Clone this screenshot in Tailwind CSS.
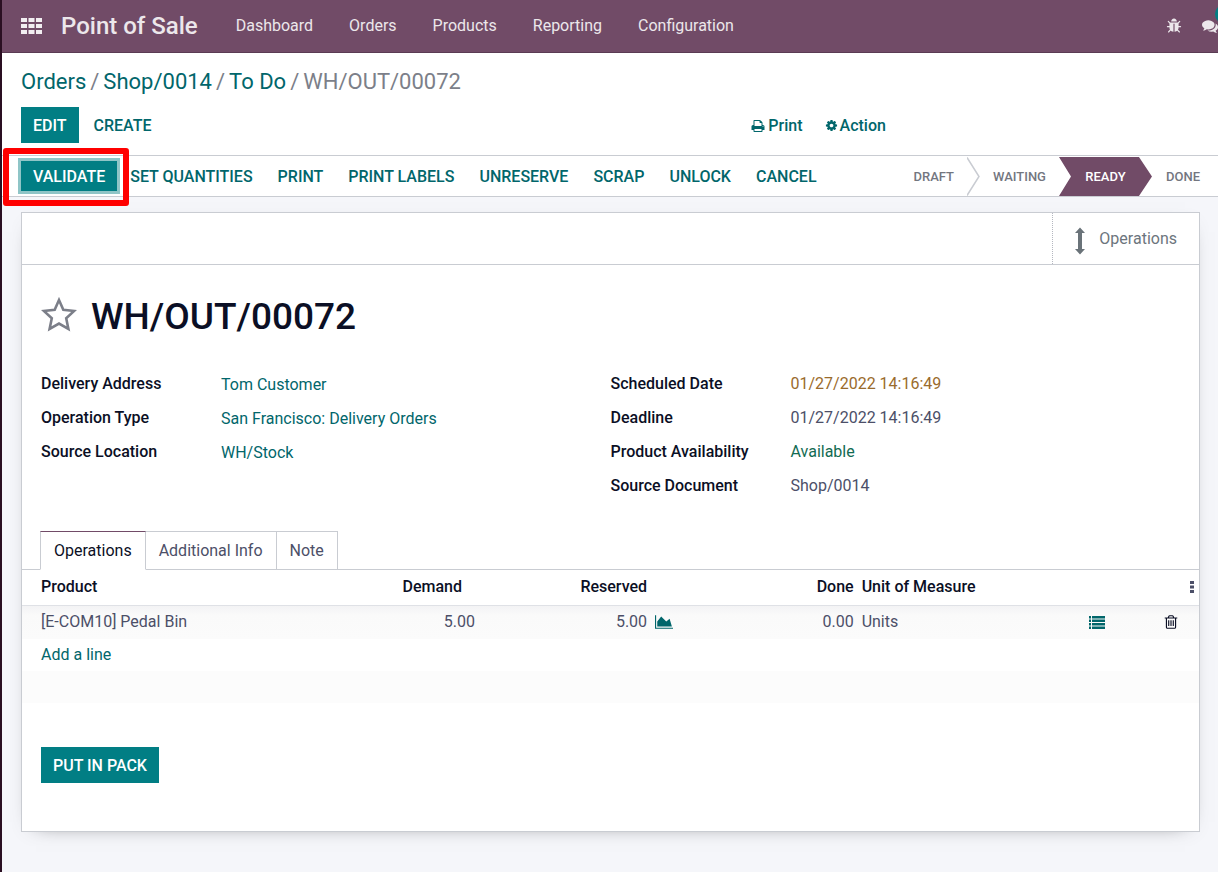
<!DOCTYPE html>
<html lang="en">
<head>
<meta charset="utf-8">
<title>WH/OUT/00072 - Point of Sale</title>
<script src="https://cdn.jsdelivr.net/npm/@tailwindcss/browser@4"></script>
</head>
<body class="min-h-screen overflow-x-hidden border-l-2 border-[#2a0f22] bg-[#f5f6fa] font-['Roboto',sans-serif] text-base leading-6 text-[#4c4f68]">

<nav class="flex h-[53px] items-center overflow-hidden border-b border-[#5a3b53] bg-[#714b67] pl-[19px] text-[#ece7eb]">
  <button type="button" aria-label="Apps" class="shrink-0">
    <svg class="block h-4 w-[21px]" viewBox="0 0 21 16" fill="#f2eef1"><path d="M0 0h6v4H0zM7.500 0h6v4h-6zM15 0h6v4h-6zM0 6h6v4H0zM7.500 6h6v4h-6zM15 6h6v4h-6zM0 12h6v4H0zM7.500 12h6v4h-6zM15 12h6v4h-6z"/></svg>
  </button>
  <a href="#" class="ml-[19px] shrink-0 text-2xl font-medium">Point of Sale</a>
  <div class="ml-[38px] flex shrink-0 gap-9">
    <a href="#">Dashboard</a>
    <a href="#">Orders</a>
    <a href="#">Products</a>
    <a href="#">Reporting</a>
    <a href="#">Configuration</a>
  </div>
  <div class="ml-auto flex shrink-0 items-center gap-5">
    <button type="button" aria-label="Debug">
      <svg class="block size-4" viewBox="0 0 1792 1792" fill="currentColor"><path d="M1696 960q0 26-19 45t-45 19h-224q0 171-67 290l208 209q19 19 19 45t-19 45q-18 19-45 19t-45-19l-198-197q-5 5-15 13t-42 28.500-65 36.500-82 29-97 13v-896h-128v896q-51 0-101.500-13.500t-87-33-66-39-43.500-32.500l-15-14-183 207q-20 21-48 21-24 0-43-16-19-18-20.500-44.500t15.500-46.500l202-227q-58-114-58-274h-224q-26 0-45-19t-19-45 19-45 45-19h224v-294l-173-173q-19-19-19-45t19-45 45-19 45 19l173 173h844l173-173q19-19 45-19t45 19 19 45-19 45l-173 173v294h224q26 0 45 19t19 45zm-480-576h-640q0-133 93.500-226.500t226.500-93.500 226.500 93.500 93.500 226.500z"/></svg>
    </button>
    <button type="button" aria-label="Conversations" class="relative w-4">
      <svg class="block size-4 min-w-4" viewBox="0 0 1792 1792" fill="currentColor"><path d="M1408 768q0 139-94 257t-256.500 186.500-353.500 68.500q-86 0-176-16-124 88-278 128-36 9-86 16h-3q-11 0-20.500-8t-11.500-21q-1-3-1-6.500t.5-6.500 2-6l2.500-5 3.500-5.500 4-5 4.500-5 4-4.500q5-6 23-25t26-29.500 22.500-29 25-38.500 20.500-44q-124-72-195-177t-71-224q0-139 94-257t256.500-186.500 353.500-68.500 353.500 68.500 256.500 186.500 94 257zm384 256q0 120-71 224.500t-195 176.500q10 24 20.500 44t25 38.500 22.500 29 26 29.500 23 25q1 1 4 4.500t4.500 5 4 5 3.500 5.500l2.500 5 2 6 .5 6.500-1 6.500q-3 14-13 22t-22 7q-50-7-86-16-154-40-278-128-90 16-176 16-271 0-472-132 58 4 88 4 161 0 309-45t264-129q125-92 192-212t67-254q0-77-23-152 129 71 204 178t75 230z"/></svg>
      <span class="absolute -top-[14px] left-[13px] size-5 rounded-full bg-[#017e84]"></span>
    </button>
  </div>
</nav>

<header class="bg-white px-[19px] pt-[13px] pb-3">
  <ol class="flex h-8 items-center gap-1 text-[22px] text-[#7c7f89]">
    <li><a href="#" class="text-[#01666b]">Orders</a></li><li>/</li>
    <li><a href="#" class="text-[#01666b]">Shop/0014</a></li><li>/</li>
    <li><a href="#" class="text-[#01666b]">To Do</a></li><li>/</li>
    <li>WH/OUT/00072</li>
  </ol>
  <div class="mt-[9px] flex h-9 items-center font-medium text-[#01666b]">
    <div class="flex basis-[62%] items-center gap-[3px]">
      <button type="button" class="h-9 bg-[#017e84] px-3 pt-px text-white">EDIT</button>
      <button type="button" class="h-9 px-3 pt-px">CREATE</button>
    </div>
    <div class="flex items-center gap-[22px] pt-px">
      <button type="button" class="flex items-center gap-[3px]">
        <svg class="size-[14px]" viewBox="0 0 1792 1792" fill="currentColor"><path d="M448 1536h896v-256h-896v256zm0-640h896v-384h-160q-40 0-68-28t-28-68v-160h-640v640zm1152 64q0-26-19-45t-45-19-45 19-19 45 19 45 45 19 45-19 19-45zm128 0v416q0 13-9.500 22.500t-22.500 9.500h-224v160q0 40-28 68t-68 28h-960q-40 0-68-28t-28-68v-160h-224q-13 0-22.500-9.500t-9.500-22.500v-416q0-79 56.500-135.500t135.500-56.500h64v-544q0-40 28-68t68-28h672q40 0 88 20t76 48l152 152q28 28 48 76t20 88v256h64q79 0 135.500 56.500t56.500 135.500z"/></svg>Print
      </button>
      <button type="button" class="flex items-center gap-[2px]">
        <svg class="size-[13px]" viewBox="0 0 1792 1792" fill="currentColor"><path d="M1152 896q0-106-75-181t-181-75-181 75-75 181 75 181 181 75 181-75 75-181zm512-109v222q0 12-8 23t-20 13l-185 28q-19 54-39 91 35 50 107 138 10 12 10 25t-9 23q-27 37-99 108t-94 71q-12 0-26-9l-138-108q-44 23-91 38-16 136-29 186-7 28-36 28h-222q-14 0-24.500-8.500t-11.500-21.500l-28-184q-49-16-90-37l-141 107q-10 9-25 9-14 0-25-11-126-114-165-168-7-10-7-23 0-12 8-23 15-21 51-66.500t54-70.500q-27-50-41-99l-183-27q-13-2-21-12.500t-8-23.500v-222q0-12 8-23t19-13l186-28q14-46 39-92-40-57-107-138-10-12-10-24 0-10 9-23 26-36 98.500-107.500t94.500-71.500q13 0 26 10l138 107q44-23 91-38 16-136 29-186 7-28 36-28h222q14 0 24.500 8.500t11.500 21.500l28 184q49 16 90 37l142-107q9-9 24-9 13 0 25 10 129 119 165 170 7 8 7 22 0 12-8 23-15 21-51 66.500t-54 70.500q26 50 41 98l183 28q13 2 21 12.500t8 23.500z"/></svg>Action
      </button>
    </div>
  </div>
</header>

<div class="flex h-[42px] items-center justify-between border-y border-[#c9ccd2] bg-white pl-[19px] font-medium text-[#01666b]">
  <div class="flex items-center gap-px">
    <div class="relative">
      <button type="button" class="block h-[30px] bg-[#017e84] px-3 pt-px text-white ring-3 ring-[#8fc5c7]">VALIDATE</button>
      <span class="pointer-events-none absolute -top-[13px] -right-3 -bottom-[15px] -left-[18px] rounded-[3px] border-6 border-[#ff0000]"></span>
    </div>
    <button type="button" class="px-3 pt-px">SET QUANTITIES</button>
    <button type="button" class="px-3 pt-px">PRINT</button>
    <button type="button" class="px-3 pt-px">PRINT LABELS</button>
    <button type="button" class="px-3 pt-px">UNRESERVE</button>
    <button type="button" class="px-3 pt-px">SCRAP</button>
    <button type="button" class="px-3 pt-px">UNLOCK</button>
    <button type="button" class="px-3 pt-px">CANCEL</button>
  </div>
  <div class="flex h-full items-center pt-px text-[13px] text-[#73767f]">
    <button type="button" class="pr-[13px]">DRAFT</button>
    <svg class="h-[39px] w-[13px]" viewBox="0 0 13 39" fill="none" stroke="#c9ccd2" stroke-width="1.500"><path d="M0 0.500L12 19.500L0 38.500"/></svg>
    <button type="button" class="px-[13px]">WAITING</button>
    <button type="button" aria-current="step" class="h-[39px] w-[93px] bg-[#714b67] text-white [clip-path:polygon(0_0,80px_0,93px_50%,80px_100%,0_100%,12px_50%)]">READY</button>
    <button type="button" class="pr-[18px] pl-[14px]">DONE</button>
  </div>
</div>

<main class="mt-[15px] mr-[18px] ml-[19px] border border-[#c9ccd2] bg-white pb-12 shadow-[0_5px_20px_-15px_#000000b0]">
  <div class="flex h-[52px] justify-end border-b border-[#c9ccd2]">
    <button type="button" class="flex items-center border-l border-dotted border-[#b4b7c0] pr-[22px] pl-[22px] text-[#6c757d]">
      <svg class="mt-1 h-7 w-[10px]" viewBox="0 0 10 28" fill="#6a7379"><path d="M5 0.500L10 6H7V22H10L5 27.500L0 22H3V6H0Z"/></svg>
      <span class="ml-[14px] pt-px">Operations</span>
    </button>
  </div>

  <div class="px-[19px]">
    <div class="mt-7 flex h-12 items-center">
      <button type="button" aria-label="Priority" class="pb-[6px]">
        <svg class="block h-[35px] w-[36px]" viewBox="0 0 36 35" fill="none" stroke="#7c7f89" stroke-width="2.600"><path d="M18 3L22.300 12.700L33.200 13.900L25.200 21.200L27.400 32L18 26.600L8.600 32L10.800 21.200L2.800 13.900L13.700 12.700Z"/></svg>
      </button>
      <h1 class="ml-[14px] text-[37px] font-medium text-[#0b0f25]">WH/OUT/00072</h1>
    </div>

    <div class="mt-[26px] grid grid-cols-2">
      <dl class="grid auto-rows-[34px] grid-cols-[180px_1fr] items-center content-start">
        <dt class="font-medium text-[#0b0f25]">Delivery Address</dt><dd class="pt-[2px]"><a href="#" class="text-[#01666b]">Tom Customer</a></dd>
        <dt class="font-medium text-[#0b0f25]">Operation Type</dt><dd class="pt-[2px]"><a href="#" class="text-[#01666b]">San Francisco: Delivery Orders</a></dd>
        <dt class="font-medium text-[#0b0f25]">Source Location</dt><dd class="pt-[2px]"><a href="#" class="text-[#01666b]">WH/Stock</a></dd>
      </dl>
      <dl class="grid auto-rows-[34px] grid-cols-[180px_1fr] items-center content-start">
        <dt class="font-medium text-[#0b0f25]">Scheduled Date</dt><dd class="text-[#9a6b2c]">01/27/2022 14:16:49</dd>
        <dt class="font-medium text-[#0b0f25]">Deadline</dt><dd>01/27/2022 14:16:49</dd>
        <dt class="font-medium text-[#0b0f25]">Product Availability</dt><dd class="text-[#136b53]">Available</dd>
        <dt class="font-medium text-[#0b0f25]">Source Document</dt><dd>Shop/0014</dd>
      </dl>
    </div>
  </div>

  <div class="mt-[28px] flex h-[39px] border-b border-[#c9ccd2] pl-[18px]" role="tablist">
    <button type="button" role="tab" aria-selected="true" class="-mb-px border border-t-[#714b67] border-r-[#c9ccd2] border-b-white border-l-[#c9ccd2] bg-white px-[13px] text-[#0b0f25]">Operations</button>
    <button type="button" role="tab" class="border-t border-r border-[#c9ccd2] px-[13px]">Additional Info</button>
    <button type="button" role="tab" class="border-t border-r border-[#c9ccd2] px-[13px]">Note</button>
  </div>

  <table class="w-full table-fixed">
    <colgroup>
      <col class="w-[25%]"><col class="w-[14%]"><col class="w-[17%]"><col class="w-[15%]"><col class="w-[18%]"><col class="w-[6%]"><col class="w-[5%]">
    </colgroup>
    <thead>
      <tr class="h-[35px] border-b border-[#dfe1e6] text-[#0b0f25]">
        <th class="pl-[19px] text-left font-medium">Product</th>
        <th class="pr-[19px] text-right font-medium">Demand</th>
        <th class="pr-[34px] text-right font-medium">Reserved</th>
        <th class="pr-1 text-right font-medium">Done</th>
        <th class="pl-1 text-left font-medium">Unit of Measure</th>
        <th></th>
        <th class="pr-[5px]"><button type="button" aria-label="Optional columns" class="ml-auto block"><svg class="block h-3 w-1" viewBox="0 0 4 12" fill="#4c4f68"><path d="M0 0h4v3h-4zM0 4.500h4v3h-4zM0 9h4v3h-4z"/></svg></button></th>
      </tr>
    </thead>
    <tbody>
      <tr class="h-[34px] bg-linear-to-b from-[#f2f2f4] via-[#fafafa] via-30% to-[#fbfbfb]">
        <td class="pl-[19px]">[E-COM10] Pedal Bin</td>
        <td class="pr-[6px] text-right">5.00</td>
        <td class="pr-2"><div class="flex items-center justify-end gap-2">5.00<button type="button" aria-label="Forecast report"><svg class="block h-4 w-[18px]" viewBox="0 0 2048 1792" fill="#01666b"><path d="M2048 1536v128h-2048v-1536h128v1408h1920zm-384-1024l256 896h-1664v-576l448-576 576 576z"/></svg></button></div></td>
        <td class="pr-1 text-right">0.00</td>
        <td class="pl-1">Units</td>
        <td><button type="button" aria-label="Detailed operations" class="ml-[19px] block"><svg class="block h-[13px] w-4" viewBox="0 0 16 13" fill="#01666b"><path d="M0 0h2v2.500H0zM3 0h13v2.500H3zM0 3.500h2v2.500H0zM3 3.500h13v2.500H3zM0 7h2v2.500H0zM3 7h13v2.500H3zM0 10.500h2v2.500H0zM3 10.500h13v2.500H3z"/></svg></button></td>
        <td class="pr-5"><button type="button" aria-label="Delete row" class="ml-auto block"><svg class="block size-4" viewBox="0 0 1792 1792" fill="#0b0f25"><path d="M704 736v576q0 14-9 23t-23 9h-64q-14 0-23-9t-9-23v-576q0-14 9-23t23-9h64q14 0 23 9t9 23zm256 0v576q0 14-9 23t-23 9h-64q-14 0-23-9t-9-23v-576q0-14 9-23t23-9h64q14 0 23 9t9 23zm256 0v576q0 14-9 23t-23 9h-64q-14 0-23-9t-9-23v-576q0-14 9-23t23-9h64q14 0 23 9t9 23zm128 724v-948h-896v948q0 22 7 40.500t14.500 27 10.500 8.500h832q3 0 10.500-8.500t14.500-27 7-40.500zm-672-1076h448l-48-117q-7-9-17-11h-317q-10 2-17 11zm928 32v64q0 14-9 23t-23 9h-96v948q0 83-47 143.500t-113 60.500h-832q-66 0-113-58.500t-47-141.500v-952h-96q-14 0-23-9t-9-23v-64q0-14 9-23t23-9h309l70-167q15-37 54-63t79-26h320q40 0 79 26t54 63l70 167h309q14 0 23 9t9 23z"/></svg></button></td>
      </tr>
      <tr class="h-8"><td colspan="7" class="pl-[19px]"><a href="#" class="text-[#01666b]">Add a line</a></td></tr>
      <tr class="h-8 bg-[#fcfcfc]"><td colspan="7"></td></tr>
    </tbody>
  </table>

  <button type="button" class="mt-11 ml-[19px] block h-9 bg-[#017e84] px-3 pt-px font-medium text-white">PUT IN PACK</button>
</main>

</body>
</html>
